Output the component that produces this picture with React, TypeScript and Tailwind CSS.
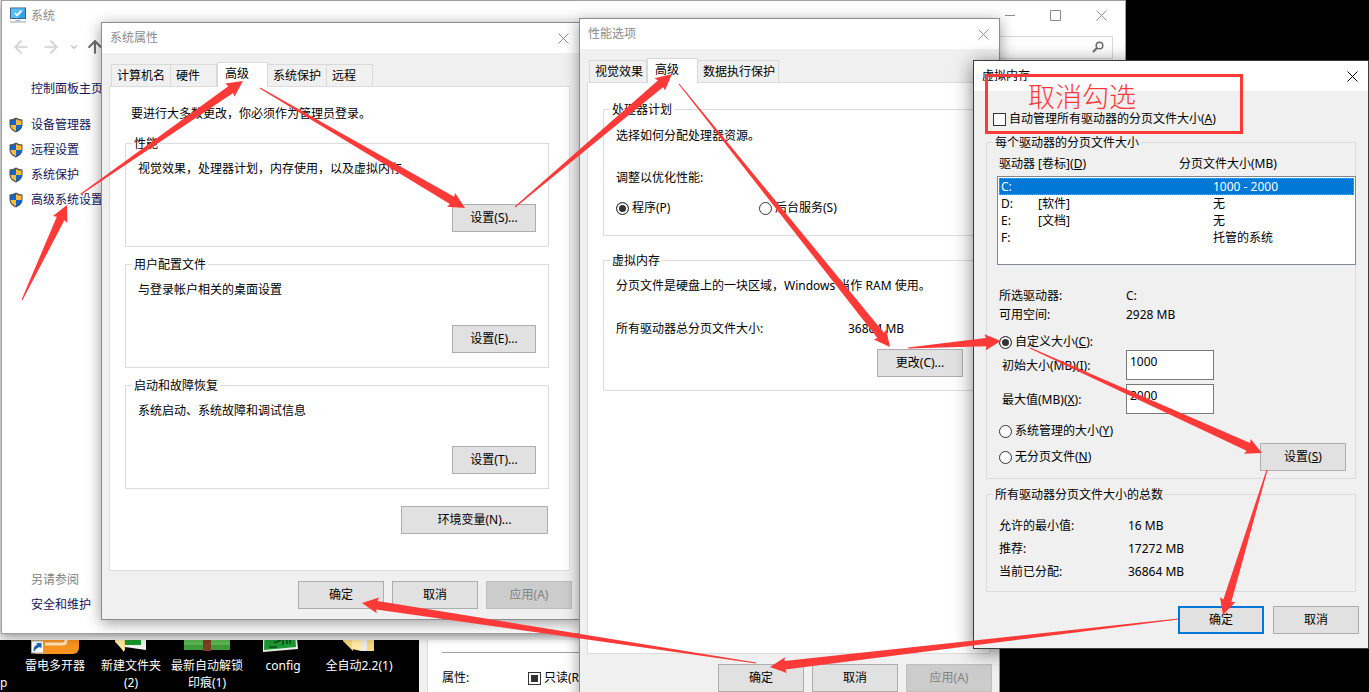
import { useId } from "react";
import type { ReactNode } from "react";
import clsx from "clsx";
import { ArrowLeft, ArrowRight, ArrowUp, ChevronDown } from "lucide-react";

type Point = [number, number];

interface TabItem {
  label: string;
  size: string;
  active?: boolean;
}

const systemTabs: TabItem[] = [
  { label: "计算机名", size: "w-[60px]" },
  { label: "硬件",     size: "w-[46px]" },
  { label: "高级",     size: "w-[51px]", active: true },
  { label: "系统保护", size: "w-[59px]" },
  { label: "远程",     size: "w-[46px]" },
];

const performanceTabs: TabItem[] = [
  { label: "视觉效果",     size: "w-[58px]" },
  { label: "高级",         size: "w-[51px]", active: true },
  { label: "数据执行保护", size: "w-[81px]" },
];

const sidebarLinks = ["设备管理器", "远程设置", "系统保护", "高级系统设置"];

const systemGroups = [
  { title: "性能",           text: "视觉效果，处理器计划，内存使用，以及虚拟内存", button: "设置(S)..." },
  { title: "用户配置文件",   text: "与登录帐户相关的桌面设置",                     button: "设置(E)..." },
  { title: "启动和故障恢复", text: "系统启动、系统故障和调试信息",                 button: "设置(T)..." },
];

const drives = [
  { drive: "C:", label: "",       size: "1000 - 2000", selected: true },
  { drive: "D:", label: "[软件]", size: "无" },
  { drive: "E:", label: "[文档]", size: "无" },
  { drive: "F:", label: "",       size: "托管的系统" },
];

const totals = [
  { label: "允许的最小值:", value: "16 MB" },
  { label: "推荐:",         value: "17272 MB" },
  { label: "当前已分配:",   value: "36864 MB" },
];

// tail -> tip of every step
const steps: { from: Point; to: Point }[] = [
  { from: [22, 300],   to: [67, 205] },
  { from: [81, 194],   to: [243, 81] },
  { from: [260, 88],   to: [465, 208] },
  { from: [515, 207],  to: [672, 74] },
  { from: [679, 84],   to: [890, 347] },
  { from: [908, 348],  to: [1001, 341] },
  { from: [1030, 348], to: [1262, 453] },
  { from: [1267, 470], to: [1223, 615] },
  { from: [1178, 619], to: [770, 667] },
  { from: [756, 663],  to: [362, 603] },
];

function arrowPoints([x1, y1]: Point, [x2, y2]: Point) {
  const len = Math.hypot(x2 - x1, y2 - y1);
  const ux = (x2 - x1) / len;
  const uy = (y2 - y1) / len;
  const at = (back: number, side: number) =>
    `${x2 - ux * back - uy * side},${y2 - uy * back + ux * side}`;
  return [at(len, 0.5), at(15, 4.2), at(16, 8), at(0, 0), at(16, -8), at(15, -4.2), at(len, -0.5)].join(" ");
}

const CloseIcon = () => (
  <svg width="11" height="11" viewBox="0 0 11 11" fill="none" stroke="currentColor">
    <path d="M0.5 0.5l10 10M10.5 0.5l-10 10" />
  </svg>
);

const Shield = () => (
  <svg width="14" height="16" viewBox="0 0 14 16" className="shrink-0">
    <path d="M7 .5c2 1.300 4 1.900 6.500 2v5c0 3.700-2.500 6.300-6.500 8C3 13.800.5 11.200.5 7.500v-5C3 2.400 5 1.800 7 .5z" fill="#4a4f57" />
    <path d="M7 2v6H1.500V3.600C3.500 3.500 5.300 3 7 2z" fill="#0f66cf" />
    <path d="M7 2v6h5.500V3.600C10.500 3.500 8.700 3 7 2z" fill="#fdbb36" />
    <path d="M1.500 8H7v6.200C3.900 12.900 1.800 11 1.500 8z" fill="#fdbb36" />
    <path d="M12.500 8H7v6.200c3.100-1.300 5.200-3.200 5.500-6.200z" fill="#0f66cf" />
  </svg>
);

const MonitorIcon = () => (
  <svg width="16" height="16" viewBox="0 0 16 16">
    <rect x="0.500" y="1" width="15" height="10.500" fill="#2fa4ee" stroke="#3d5f80" />
    <path d="M1 1.500h14L8 11H1z" fill="#58bdf8" />
    <path d="M4.800 6l2.300 2.300 4.300-4.600" fill="none" stroke="#fff" strokeWidth="1.700" />
    <path d="M5.500 13h5v1h-5z" fill="#9db4c5" />
    <path d="M0 14.500h16v1H0z" fill="#8aa2b5" />
  </svg>
);

const SearchIcon = () => (
  <svg width="12" height="12" viewBox="0 0 12 12" fill="none" stroke="#6e6e6e">
    <circle cx="7.500" cy="4.500" r="3.300" strokeWidth="1.500" />
    <path d="M5 7L1 11" strokeWidth="2" />
  </svg>
);

const buttonWidths = {
  small:  "w-[84px]",
  normal: "w-[86px]",
  wide:   "w-[147px]",
};

function Button({ children, size = "normal", primary, disabled }: {
  children: ReactNode;
  size?: keyof typeof buttonWidths;
  primary?: boolean;
  disabled?: boolean;
}) {
  return (
    <button
      type="button"
      disabled={disabled}
      className={clsx(
        "h-7 shrink-0 text-center",
        buttonWidths[size],
        disabled
          ? "border border-[#bfbfbf] bg-[#cccccc] text-[#838383]"
          : primary
            ? "border-2 border-[#0078d7] bg-[#e1e1e1]"
            : "border border-[#adadad] bg-[#e1e1e1]",
      )}
    >
      {children}
    </button>
  );
}

function TitleBar({ title, active }: { title: string; active?: boolean }) {
  return (
    <header className={clsx("flex h-[30px] items-center justify-between bg-white pr-[10px] pl-2", !active && "text-[#8c8c8c]")}>
      <h2>{title}</h2>
      <button type="button" aria-label="关闭"><CloseIcon /></button>
    </header>
  );
}

function Tabs({ items }: { items: TabItem[] }) {
  return (
    <div role="tablist" className="flex items-end pl-0.5">
      {items.map((t) => (
        <button
          key={t.label}
          type="button"
          role="tab"
          aria-selected={!!t.active}
          className={clsx(
            "flex shrink-0 border-[#d9d9d9] pt-[3px] text-left whitespace-nowrap",
            t.size,
            t.active
              ? "relative -mb-px h-[25px] border-x border-t bg-white pl-[7px]"
              : "h-[22px] border-t border-r bg-[#f0f0f0] pl-[5px] first:border-l",
          )}
        >
          {t.label}
        </button>
      ))}
    </div>
  );
}

function Group({ title, className, children }: { title: string; className?: string; children: ReactNode }) {
  return (
    <fieldset className={clsx("min-w-0 border border-[#dcdcdc] pl-3", className)}>
      <legend className="-ml-1.5 px-0.5 pt-0.5">{title}</legend>
      {children}
    </fieldset>
  );
}

function Radio({ name, checked, children }: { name: string; checked?: boolean; children: ReactNode }) {
  return (
    <label className="flex items-center gap-[3px]">
      <input
        type="radio"
        name={name}
        defaultChecked={checked}
        className="size-[13px] shrink-0 appearance-none rounded-full border border-[#333] bg-white checked:bg-[#333] checked:shadow-[inset_0_0_0_2px_#fff]"
      />
      <span>{children}</span>
    </label>
  );
}

function SizeField({ value, children }: { value: string; children: ReactNode }) {
  const id = useId();
  return (
    <div className="flex items-center">
      <label htmlFor={id} className="w-[127px] pt-0.5 pl-[3px]">{children}</label>
      <input id={id} defaultValue={value} className="h-[30px] w-[88px] border border-[#7a7a7a] bg-white px-[3px] pb-2" />
    </div>
  );
}

function DialogButtons() {
  return (
    <footer className="flex justify-end gap-2 py-[10px]">
      <Button>确定</Button>
      <Button>取消</Button>
      <Button disabled>应用(A)</Button>
    </footer>
  );
}

const desktopIcons = [
  {
    label: "雷电多开器",
    art: (
      <>
        <rect width="48" height="48" rx="6" fill="#f7931e" />
        <path d="M14 38h18q3 0 3-4v-8" fill="none" stroke="#ffe3bd" strokeWidth="3" />
        <rect x="0.500" y="35" width="12" height="12" fill="#fff" stroke="#9ab" />
        <path d="M3 46c-1-4 0-6 3.500-7.500L5 37h5.500v5.500L9 41c-3 1-4.500 2-6 5z" fill="#1b64b5" />
      </>
    ),
  },
  {
    label: "新建文件夹 (2)",
    art: (
      <>
        <path d="M8 8h10v37L8 36z" fill="#f5d77c" />
        <path d="M18 10h21v34l-21-3z" fill="#f2f2f2" />
        <path d="M18 12h16v27H18z" fill="#159a2c" />
        <path d="M8 35l9-2v13z" fill="#ffe9a6" />
      </>
    ),
  },
  {
    label: "最新自动解锁印痕(1)",
    art: (
      <>
        <rect x="1" y="6" width="46" height="38" fill="#3f9b3a" />
        <rect x="1" y="34" width="46" height="5" fill="#5cb552" />
        <rect x="20" y="6" width="8" height="39" fill="#7d3f22" />
      </>
    ),
  },
  {
    label: "config",
    art: (
      <>
        <path d="M4 10h32l3 33-35 3z" fill="#e8efe6" />
        <path d="M6 12h29l2 29-32 3z" fill="#1d9a35" />
        <path d="M15 37l7-3M24 34v5M28 33v5M31 33v5M10 41h8" stroke="#0a4d18" strokeWidth="1.500" />
      </>
    ),
  },
  {
    label: "全自动2.2(1)",
    art: (
      <>
        <path d="M8 8h10v37L8 35z" fill="#f5d77c" />
        <path d="M17 12h9v33l-9-2z" fill="#ffe9a6" />
        <path d="M26 12h6v33h-6z" fill="#e9e9e9" />
        <path d="M32 10h7v35h-7z" fill="#f5d77c" />
      </>
    ),
  },
];

function Desktop() {
  return (
    <>
      <ul className="absolute top-[606px] left-[17px] flex text-center leading-[17px] text-white">
        {desktopIcons.map((d) => (
          <li key={d.label} className="flex w-19 flex-col items-center">
            <svg width="48" height="48" viewBox="0 0 48 48">{d.art}</svg>
            <span className="mt-[3px]">{d.label}</span>
          </li>
        ))}
      </ul>
      <span className="absolute top-[675px] left-0 text-white">p</span>
    </>
  );
}

function FileProperties() {
  return (
    <section className="absolute top-[630px] left-[419px] w-[260px] bg-[#f0f0f0] pl-2">
      <div className="border-l border-[#d9d9d9] bg-white pt-[22px] pb-5 pl-[14px]">
        <hr className="border-[#a0a0a0]" />
        <div className="flex items-center pt-[17px]">
          <span className="w-[86px]">属性:</span>
          <label className="flex items-center gap-[3px]">
            <input type="checkbox" defaultChecked className="size-[13px] appearance-none border border-[#333] bg-[#333] shadow-[inset_0_0_0_2px_#fff]" />
            <span>只读(R)</span>
          </label>
        </div>
      </div>
    </section>
  );
}

function SystemWindow() {
  return (
    <section className="absolute top-0 left-px flex h-[634px] w-[1125px] flex-col border border-[#a0a0a0] bg-white shadow-[0_2px_10px_rgba(0,0,0,0.45)]">
      <header className="flex h-7 items-center pr-[18px] pl-2 text-[#8c8c8c]">
        <MonitorIcon />
        <h1 className="ml-[5px] flex-1 pt-0.5">系统</h1>
        <button type="button" aria-label="最小化">
          <svg width="10" height="11" viewBox="0 0 10 11" stroke="currentColor"><path d="M0 5.500h10" /></svg>
        </button>
        <button type="button" aria-label="最大化" className="ml-[35px]">
          <svg width="11" height="11" viewBox="0 0 11 11" fill="none" stroke="currentColor"><path d="M.5.5h10v10H.5z" /></svg>
        </button>
        <button type="button" aria-label="关闭" className="ml-[35px]"><CloseIcon /></button>
      </header>

      <nav className="flex h-9 items-center pr-3 pl-[9px]">
        <button type="button" aria-label="后退" className="text-[#d0d0d0]"><ArrowLeft size={20} /></button>
        <button type="button" aria-label="前进" className="ml-[10px] text-[#d0d0d0]"><ArrowRight size={20} /></button>
        <button type="button" aria-label="最近" className="ml-2 text-[#c4c4c4]"><ChevronDown size={10} strokeWidth={3} /></button>
        <button type="button" aria-label="向上" className="ml-1.5 text-[#6e6e6e]"><ArrowUp size={20} strokeWidth={2.5} /></button>
        <label className="ml-auto flex h-[23px] w-[220px] items-center border border-[#d9d9d9] pr-2">
          <input type="search" aria-label="搜索控制面板" className="min-w-0 flex-1" />
          <SearchIcon />
        </label>
      </nav>

      <aside className="flex flex-1 flex-col pt-4 pb-5 pl-[29px] text-[#14145a]">
        <a href="#home">控制面板主页</a>
        <ul className="mt-5 -ml-[22px] flex flex-col gap-[9px]">
          {sidebarLinks.map((l) => (
            <li key={l}>
              <a href={`#${l}`} className="flex items-center gap-2"><Shield />{l}</a>
            </li>
          ))}
        </ul>
        <p className="mt-auto text-[#808080]">另请参阅</p>
        <a href="#security" className="mt-[9px]">安全和维护</a>
      </aside>
    </section>
  );
}

function SystemProperties() {
  return (
    <section className="absolute top-[22px] left-[101px] w-[479px] border border-[#8c8c8c] bg-[#f0f0f0] shadow-[0_3px_14px_rgba(0,0,0,0.4)]">
      <TitleBar title="系统属性" />
      <div className="px-[7px] pt-[9px]">
        <Tabs items={systemTabs} />
        <div className="mr-0.5 border border-[#dcdcdc] bg-white pt-[19px] pr-5 pb-9 pl-[15px]">
          <p className="ml-1.5">要进行大多数更改，你必须作为管理员登录。</p>
          <div className="mt-3 flex flex-col gap-2">
            {systemGroups.map((g) => (
              <Group key={g.title} title={g.title} className="pr-3 pb-[14px]">
                <p className="pt-[9px]">{g.text}</p>
                <div className="mt-[27px] flex justify-end"><Button size="small">{g.button}</Button></div>
              </Group>
            ))}
          </div>
          <div className="mt-[17px] flex justify-end pr-px"><Button size="wide">环境变量(N)...</Button></div>
        </div>
        <DialogButtons />
      </div>
    </section>
  );
}

function PerformanceOptions() {
  return (
    <section className="absolute top-[18px] left-[579px] w-[421px] border border-[#8c8c8c] bg-[#f0f0f0] shadow-[0_3px_14px_rgba(0,0,0,0.4)]">
      <TitleBar title="性能选项" />
      <div className="px-[7px] pt-[9px]">
        <Tabs items={performanceTabs} />
        <div className="mr-0.5 min-h-[572px] border border-[#dcdcdc] bg-white pt-[17px] pr-2 pl-[15px]">
          <Group title="处理器计划" className="pb-[19px]">
            <p className="pt-[10px]">选择如何分配处理器资源。</p>
            <p className="mt-[26px]">调整以优化性能:</p>
            <div className="mt-[14px] grid grid-cols-[143px_1fr]">
              <Radio name="scheduling" checked>程序(P)</Radio>
              <Radio name="scheduling">后台服务(S)</Radio>
            </div>
          </Group>
          <Group title="虚拟内存" className="mt-[15px] pr-[17px] pb-[13px]">
            <p className="pt-[9px]">分页文件是硬盘上的一块区域，Windows 当作 RAM 使用。</p>
            <p className="mt-[27px] grid grid-cols-[232px_1fr]">
              <span>所有驱动器总分页文件大小:</span>
              <span>36864 MB</span>
            </p>
            <div className="mt-3 flex justify-end"><Button>更改(C)...</Button></div>
          </Group>
        </div>
        <DialogButtons />
      </div>
    </section>
  );
}

function VirtualMemory() {
  return (
    <section className="absolute top-[60px] left-[973px] w-[396px] border border-[#3c3c3c] bg-[#f0f0f0] pb-[14px] shadow-[0_3px_18px_rgba(0,0,0,0.5)]">
      <TitleBar title="虚拟内存" active />
      <div className="px-3 pt-5">
        <label className="ml-[7px] flex items-center gap-[3px]">
          <input type="checkbox" className="size-[13px] appearance-none border border-[#333] bg-white checked:bg-[#333]" />
          <span>自动管理所有驱动器的分页文件大小(<u>A</u>)</span>
        </label>

        <Group title="每个驱动器的分页文件大小" className="mt-1.5 pr-[9px] pb-[7px]">
          <div className="grid grid-cols-[180px_1fr] pt-[5px]">
            <span>驱动器 [卷标](<u>D</u>)</span>
            <span>分页文件大小(MB)</span>
          </div>
          <div className="mt-1 -mr-[10px] -ml-0.5 h-[89px] border border-[#828790] bg-white p-px">
            <table className="w-full table-fixed border-collapse leading-[17px]">
              <tbody>
                {drives.map((d) => (
                  <tr
                    key={d.drive}
                    className={clsx(d.selected && "bg-[#0078d7] text-white outline-1 -outline-offset-1 outline-[#ff8728] outline-dotted")}
                  >
                    <td className="w-[39px] p-0 pl-0.5">{d.drive}</td>
                    <td className="w-[175px] p-0">{d.label}</td>
                    <td className="p-0">{d.size}</td>
                  </tr>
                ))}
              </tbody>
            </table>
          </div>

          <dl className="mt-[23px] grid grid-cols-[127px_1fr] gap-y-[3px]">
            <dt>所选驱动器:</dt>
            <dd>C:</dd>
            <dt>可用空间:</dt>
            <dd>2928 MB</dd>
          </dl>

          <div className="mt-[11px]">
            <Radio name="paging" checked>自定义大小(<u>C</u>):</Radio>
          </div>
          <div className="flex flex-col gap-1">
            <SizeField value="1000">初始大小(MB)(<u>I</u>):</SizeField>
            <SizeField value="2000">最大值(MB)(<u>X</u>):</SizeField>
          </div>
          <div className="mt-[9px] flex items-end justify-between">
            <div className="flex flex-col gap-[10px] pb-1.5">
              <Radio name="paging">系统管理的大小(<u>Y</u>)</Radio>
              <Radio name="paging">无分页文件(<u>N</u>)</Radio>
            </div>
            <Button>设置(<u>S</u>)</Button>
          </div>
        </Group>

        <Group title="所有驱动器分页文件大小的总数" className="mt-1.5 pb-[11px]">
          <dl className="grid grid-cols-[129px_1fr] gap-y-[7px] pt-[15px]">
            {totals.map((t) => (
              <div key={t.label} className="contents">
                <dt>{t.label}</dt>
                <dd>{t.value}</dd>
              </div>
            ))}
          </dl>
        </Group>
      </div>

      <footer className="mt-[14px] flex justify-end gap-[9px] pr-[9px]">
        <Button primary>确定</Button>
        <Button>取消</Button>
      </footer>
    </section>
  );
}

// Red marks drawn over the windows
function Annotations() {
  return (
    <div className="pointer-events-none absolute inset-0">
      <div className="absolute top-[74px] left-[985px] h-[60px] w-[258px] border-3 border-[#fd3a38] pt-1.5 pl-10 text-[27px] leading-7 font-light text-[#fd3a38]">
        取消勾选
      </div>
      <svg className="absolute top-0 left-0 overflow-visible" width="1" height="1">
        {steps.map((s) => (
          <polygon key={s.from.join()} points={arrowPoints(s.from, s.to)} fill="#fd3a38" />
        ))}
      </svg>
    </div>
  );
}

export default function App() {
  return (
    <main className="relative h-screen w-full overflow-hidden bg-black font-['Noto_Sans','Noto_Sans_CJK_SC',sans-serif] text-[12px] leading-4 text-black">
      <Desktop />
      <FileProperties />
      {/* window left open behind the system panel */}
      <div className="absolute top-0 left-0 h-[640px] w-[700px] bg-[#f4f4f4]" />
      <SystemWindow />
      <SystemProperties />
      <PerformanceOptions />
      <VirtualMemory />
      <Annotations />
    </main>
  );
}
